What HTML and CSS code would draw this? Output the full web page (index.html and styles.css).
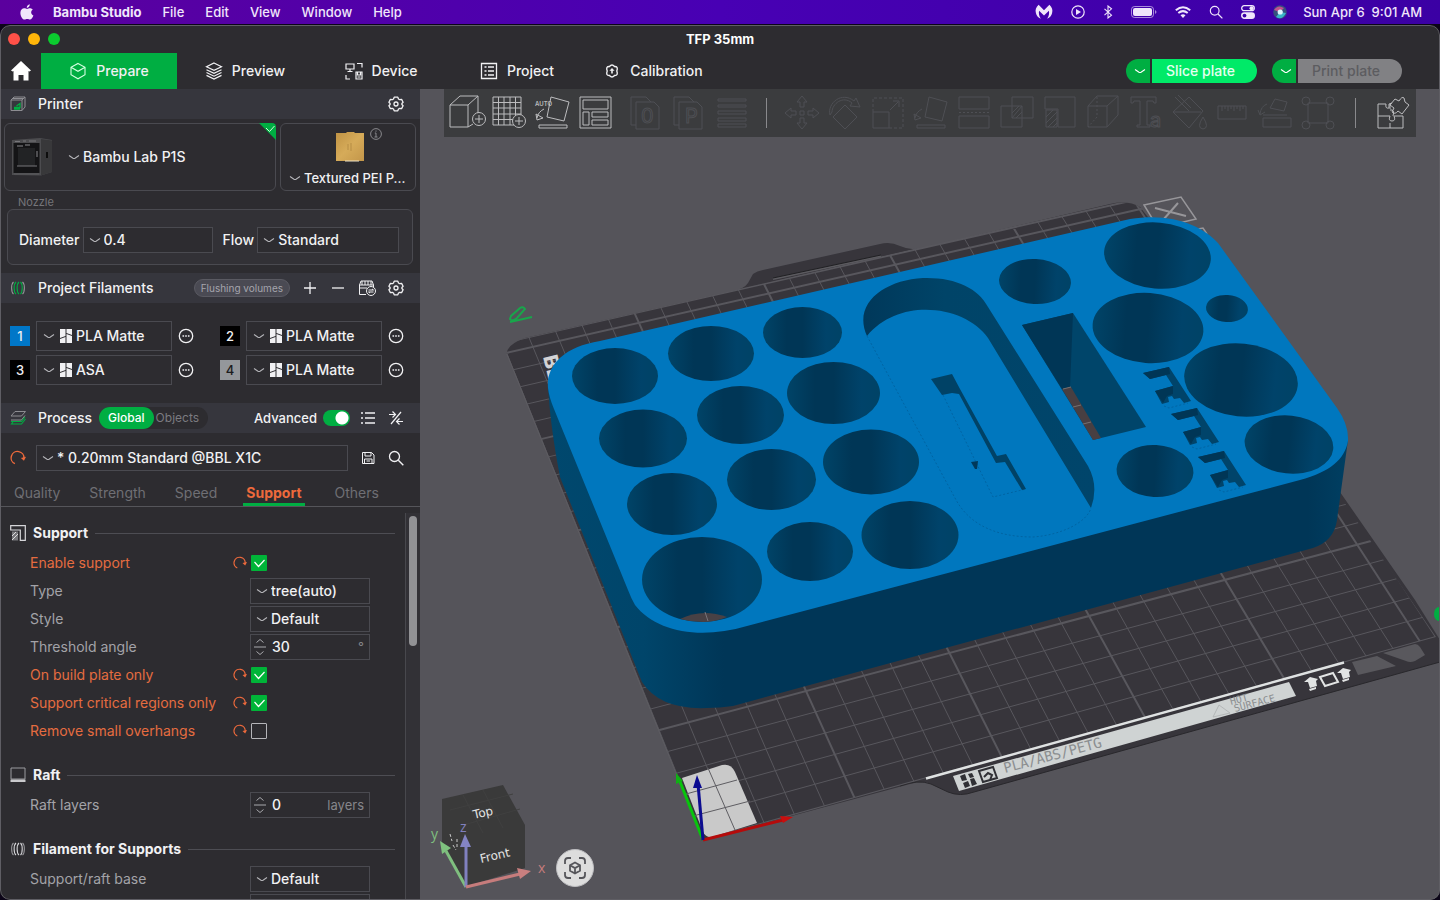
FILE: index.html
```html
<!DOCTYPE html>
<html lang="en">
<head>
<meta charset="utf-8">
<title>TFP 35mm - Bambu Studio</title>
<link rel="stylesheet" href="styles.css">
</head>
<body>
<svg class="defs" aria-hidden="true">
  <symbol id="chev" viewBox="0 0 12 12"><path d="M1 4.500L5 7.200Q6 7.800 7 7.200L11 4.500" fill="none" stroke="currentColor" stroke-width="1.100"/></symbol>
  <symbol id="gear" viewBox="0 0 16 16"><path d="M6.200 1.200h3.600l.7 1.800 1.200.7 1.900-.3 1.500 2.800-1.200 1.300v1l1.200 1.300-1.500 2.800-1.900-.3-1.200.7-.7 1.800H6.200l-.7-1.800-1.200-.7-1.900.3L.9 9.800l1.200-1.300v-1L.9 6.200l1.500-2.800 1.900.3 1.200-.7z" fill="none" stroke="currentColor" stroke-width="1.300" stroke-linejoin="round"/><circle cx="8" cy="8" r="2" fill="none" stroke="currentColor" stroke-width="1.300"/></symbol>
  <symbol id="dots" viewBox="0 0 16 16"><circle cx="8" cy="8" r="6.700" fill="none" stroke="currentColor" stroke-width="1.300"/><path d="M4.500 8h1.600M7.200 8h1.600M9.900 8h1.600" stroke="currentColor" stroke-width="1.500"/></symbol>
  <symbol id="brand" viewBox="0 0 12 14"><path fill="currentColor" d="M0 0h5.500v7L0 9zM0 10l5.500-2v6H0zM6.500 0H12v6L6.500 4zM6.500 5L12 7v7H6.500z"/></symbol>
  <symbol id="reset" viewBox="0 0 14 14"><path d="M4.300 12A5.600 5.600 0 1 1 12.200 7.300" fill="none" stroke="currentColor" stroke-width="1.200"/><path d="M9.500 7l2.700 2.400L14 6z" fill="currentColor"/></symbol>
  <symbol id="coil" viewBox="0 0 16 16"><g fill="none" stroke-width="1.100"><path stroke="#96969a" d="M3.500 2C1 4 1 12 3.500 14M12.500 2C15 4 15 12 12.500 14"/><path stroke="currentColor" d="M6 2C3.500 4 3.500 12 6 14M9 2C6.500 4 6.500 12 9 14M10.500 2C12.800 4 12.800 12 10.500 14"/></g></symbol>
  <symbol id="spin" viewBox="0 0 12 20"><path d="M2.500 5.500L6 2.500l3.500 3M0 10h12M2.500 14.500L6 17.500l3.500-3" fill="none" stroke="currentColor"/></symbol>
  <symbol id="search" viewBox="0 0 16 16"><circle cx="6.500" cy="6.500" r="5" fill="none" stroke="currentColor" stroke-width="1.300"/><path d="M10.300 10.300l5 5" stroke="currentColor" stroke-width="1.400"/></symbol>
</svg>

<header class="menubar">
  <nav class="menus" aria-label="Menu bar">
    <svg class="apple" viewBox="0 0 14 17"><path fill="currentColor" d="M9.800.3c.1 1.900-1.200 3.400-3 3.600C6.600 2.200 8.100.5 9.800.3zM12.700 5.800c-2.300 1.400-1.900 4.700.7 5.700-.7 1.900-2 4-3.400 4.100-1 0-1.500-.6-2.700-.6s-1.800.6-2.700.6C2.200 15.500.3 11.700.4 8.700.5 6 2.200 4.300 4.200 4.300c1.200 0 2.100.7 2.900.7.800 0 1.900-.8 3.300-.7.900.1 1.700.5 2.300 1.500z"/></svg>
    <b>Bambu Studio</b><span>File</span><span>Edit</span><span>View</span><span>Window</span><span>Help</span>
  </nav>
  <div class="status">
    <svg width="18" height="16" viewBox="0 0 20 16"><path fill="currentColor" d="M4 0l6 6 6-6c3 3 4 6 3 9-.5 3-2.500 5-5.500 6.500 2-3 2.500-6 2-9L10 12 4.500 6.500c-.5 3 0 6 2 9C3.500 14 1.500 12 1 9 0 6 1 3 4 0z"/></svg>
    <svg width="14" height="14" viewBox="0 0 14 14"><circle cx="7" cy="7" r="6.200" fill="none" stroke="currentColor" stroke-width="1.200"/><path d="M5 4l5 3-5 3z" fill="currentColor"/></svg>
    <svg width="10" height="14" viewBox="0 0 10 14"><path d="M1.500 3.800l7 6.400L5 13V1l3.500 2.800-7 6.400" fill="none" stroke="currentColor" stroke-width="1.100"/></svg>
    <svg width="26" height="12" viewBox="0 0 26 12"><rect x=".5" y=".5" width="22" height="11" rx="3" fill="none" stroke="currentColor" opacity=".6"/><rect x="2" y="2" width="19" height="8" rx="2" fill="currentColor"/><path d="M24 4v4q1.500-1 1.500-2T24 4" fill="currentColor" opacity=".6"/></svg>
    <svg width="16" height="12" viewBox="0 0 16 12"><g fill="none" stroke="currentColor" stroke-width="2"><path d="M.8 4.200q7.200-6 14.400 0M3.300 7q4.700-3.800 9.400 0"/></g><path d="M5.500 9.200q2.500-1.800 5 0L8 12z" fill="currentColor"/></svg>
    <svg width="14" height="14" viewBox="0 0 16 16"><use href="#search"/></svg>
    <svg width="14" height="14" viewBox="0 0 14 14"><g fill="none" stroke="currentColor" stroke-width="1.300"><rect x=".7" y=".7" width="12.600" height="5" rx="2.500"/><rect x=".7" y="8" width="12.600" height="5.300" rx="2.600" fill="currentColor"/></g><circle cx="10.500" cy="3.200" r="2" fill="currentColor"/><circle cx="3.500" cy="10.600" r="1.900" fill="#3d00a8"/></svg>
    <svg width="14" height="14" viewBox="0 0 14 14"><circle cx="7" cy="7" r="6.800" fill="#35507e"/><path d="M1 5q4-6 10-2L7 7z" fill="#c2508f"/><path d="M3 12q6 4 10-4L7 7z" fill="#39b4c8"/><circle cx="7.200" cy="7" r="2.600" fill="#dff4ff"/></svg>
    <time>Sun Apr 6&nbsp; 9:01 AM</time>
  </div>
</header>

<div class="window">
  <div class="titlebar">
    <div class="lights"><i class="close"></i><i class="min"></i><i class="max"></i></div>
    <h1>TFP 35mm</h1>
  </div>
  <div class="tabbar">
    <button class="home" aria-label="Home"><svg width="20" height="20" viewBox="0 0 20 20"><path fill="#fff" d="M10 0l10 9.500-1.500 1L17.500 10v9.500h-5V14h-5v5.500h-5V10l-1 .5L0 9.500z"/></svg></button>
    <nav class="tabs" aria-label="Views">
      <button class="on"><svg viewBox="0 0 18 18"><path d="M9 1.500l7 3.800v7.500l-7 4-7-4V5.300zM2 5.300l7 4 7-4" fill="none" stroke="#d5ffe2" stroke-width="1.100"/></svg>Prepare</button>
      <button><svg viewBox="0 0 18 18"><path d="M9 1l7.500 3.700L9 8.400 1.500 4.700zM1.500 7.700L9 11.300l7.500-3.600M1.500 10.500L9 14.200l7.500-3.700M1.500 13.400L9 17l7.500-3.600" fill="none" stroke="currentColor" stroke-width="1.200"/></svg>Preview</button>
      <button><svg viewBox="0 0 18 18"><path d="M1 2h8v5H1zM5 7v2M2.500 9.500h5M12 1.500h5v4M1 13v4h4M11 10h6v7h-6zM12.500 10v3h3v-3M12.500 15h3" fill="none" stroke="currentColor" stroke-width="1.200"/></svg>Device</button>
      <button><svg viewBox="0 0 18 18"><path d="M1.500 1.500h15v15h-15z" fill="none" stroke="currentColor" stroke-width="1.300"/><path d="M4.500 5h2M4.500 9h2M4.500 13h2M8 5h6M8 9h6M8 13h6" stroke="currentColor" stroke-width="1.300"/></svg>Project</button>
      <button><svg viewBox="0 0 18 18"><path d="M6.500 4.500q2.500-3 5 0 4-.2 2.300 4.500 1.700 4.700-2.300 4.500-2.500 3-5 0Q2.500 13.700 4.200 9 2.500 4.300 6.500 4.500z" fill="none" stroke="currentColor" stroke-width="1.400"/><path d="M9 6l2.600 2.800H9.800v2.700H8.200V8.800H6.400z" fill="currentColor"/></svg>Calibration</button>
    </nav>
    <div class="actions">
      <div class="pill"><button class="drop" aria-label="Slice options"><svg class="chev"><use href="#chev"/></svg></button><button class="go">Slice plate</button></div>
      <div class="pill"><button class="drop" aria-label="Print options"><svg class="chev"><use href="#chev"/></svg></button><button class="go off" disabled>Print plate</button></div>
    </div>
  </div>

  <div class="work">
    <aside class="side">
      <div class="bar">
        <svg class="lead" viewBox="0 0 16 16"><path d="M1 4l3-3h11v10l-3 3.500H1zM1 4h11v10.500M12 4l3-3M3 2.500h11" fill="none" stroke="#8d8d92"/><path d="M4 11.500h6V7.500L6.500 10M4 13h6" fill="none" stroke="#00ae42" stroke-width="1.300"/></svg>
        <h2>Printer</h2>
        <button class="ico push" aria-label="Printer settings"><svg><use href="#gear"/></svg></button>
      </div>
      <div class="cards">
        <div class="card machine">
          <svg width="42" height="42" viewBox="0 0 42 42"><path d="M1 4l28-2 12 2v32l-11 3.500L1 39z" fill="#4c4c4f"/><path d="M30 3l11 1.500V36l-11 3.500z" fill="#38383a"/><path d="M2.500 7h26v30h-26z" fill="#141416"/><path d="M7 12h17v18H7z" fill="#222325"/><path d="M4 5.500h5M12 5h3M18 5h7M6 30h20" stroke="#77777b" fill="none"/><path d="M26 15v6M6 10h6M14 9h5" stroke="#8a8a8e"/><path d="M36 16v6" stroke="#0d0d0d" stroke-width="2"/><path d="M3 38h25" stroke="#5b5b5e"/></svg>
          <svg class="chev"><use href="#chev"/></svg>
          <select aria-label="Printer model"><option>Bambu Lab P1S</option></select>
          <svg class="flag" viewBox="0 0 17 17"><path d="M0 0h13q4 0 4 4v13z" fill="#00ae42"/><path d="M7 5l3.500 3.500L15.500 3" fill="none" stroke="#d7f7e0"/></svg>
        </div>
        <div class="card bed">
          <svg class="pei" viewBox="0 0 28 30"><defs><linearGradient id="gold" x2="1" y2="1"><stop stop-color="#c09344"/><stop offset=".5" stop-color="#d6ab59"/><stop offset="1" stop-color="#c3964a"/></linearGradient></defs><path d="M0 1h10l1-1h7l1 1h9v28H0z" fill="url(#gold)"/><path d="M12 12v6M15 11v8" stroke="#b58c44"/><path d="M9 29h14" stroke="#eee2c6"/></svg>
          <svg class="info" viewBox="0 0 12 12"><circle cx="6" cy="6" r="5.400" fill="none" stroke="currentColor"/><path d="M6 5v4M4.800 5H6M4.500 9h3M6 2.500v1.200" stroke="currentColor" fill="none"/></svg>
          <div class="pick"><svg class="chev"><use href="#chev"/></svg><select aria-label="Plate type"><option>Textured PEI P...</option></select></div>
        </div>
      </div>
      <fieldset class="nozzle">
        <legend>Nozzle</legend>
        <div class="box">
          <label for="dia">Diameter</label>
          <span class="field grow"><svg class="chev"><use href="#chev"/></svg><select id="dia"><option>0.4</option></select></span>
          <label for="flow" class="flow">Flow</label>
          <span class="field grow2"><svg class="chev"><use href="#chev"/></svg><select id="flow"><option>Standard</option></select></span>
        </div>
      </fieldset>

      <div class="bar">
        <svg class="lead green"><use href="#coil"/></svg>
        <h2>Project Filaments</h2>
        <button class="flush push">Flushing volumes</button>
        <button class="ico" aria-label="Add filament"><svg viewBox="0 0 16 16"><path d="M8 2v12M2 8h12" stroke="currentColor" stroke-width="1.300"/></svg></button>
        <button class="ico" aria-label="Remove filament"><svg viewBox="0 0 16 16"><path d="M2 8h12" stroke="currentColor" stroke-width="1.300"/></svg></button>
        <button class="ico wide" aria-label="Sync filaments"><svg viewBox="0 0 18 16"><path d="M8 14.500H1.500V5l1.500-4h11l1.500 4v2M1.500 5h14M4 1v4M7 1v4M10 1v4M13 1v4M2 8h7" fill="none" stroke="currentColor"/><circle cx="13" cy="11" r="4.500" fill="#36363c" stroke="currentColor"/><path d="M10.500 10h5l-1.500-1M15.500 12h-5l1.500 1" fill="none" stroke="currentColor"/></svg></button>
        <button class="ico" aria-label="Filament settings"><svg><use href="#gear"/></svg></button>
      </div>
      <div class="filaments">
        <div class="fil"><b class="sw blue">1</b><span class="field"><svg class="chev"><use href="#chev"/></svg><svg class="brand"><use href="#brand"/></svg><select aria-label="Filament 1"><option>PLA Matte</option></select></span><button class="ico" aria-label="Edit filament 1"><svg><use href="#dots"/></svg></button></div>
        <div class="fil"><b class="sw">2</b><span class="field"><svg class="chev"><use href="#chev"/></svg><svg class="brand"><use href="#brand"/></svg><select aria-label="Filament 2"><option>PLA Matte</option></select></span><button class="ico" aria-label="Edit filament 2"><svg><use href="#dots"/></svg></button></div>
        <div class="fil"><b class="sw">3</b><span class="field"><svg class="chev"><use href="#chev"/></svg><svg class="brand"><use href="#brand"/></svg><select aria-label="Filament 3"><option>ASA</option></select></span><button class="ico" aria-label="Edit filament 3"><svg><use href="#dots"/></svg></button></div>
        <div class="fil"><b class="sw gray">4</b><span class="field"><svg class="chev"><use href="#chev"/></svg><svg class="brand"><use href="#brand"/></svg><select aria-label="Filament 4"><option>PLA Matte</option></select></span><button class="ico" aria-label="Edit filament 4"><svg><use href="#dots"/></svg></button></div>
      </div>

      <div class="bar">
        <svg class="lead" viewBox="0 0 16 16"><path d="M5 1.500h10.500L11.500 6H1zM15 5.500L11.500 10H1" fill="none" stroke="#8d8d92"/><path d="M15.500 9L11.500 14H1.500l1.500-2M15 7l-3.500 4.500H1" fill="none" stroke="#00ae42" stroke-width="1.100"/></svg>
        <h2>Process</h2>
        <div class="scope"><button class="on">Global</button><button>Objects</button></div>
        <label for="adv" class="push adv">Advanced</label><input type="checkbox" id="adv" class="switch" checked>
        <button class="ico list" aria-label="Parameter list"><svg viewBox="0 0 16 16"><path d="M1 3h2M1 8h2M1 13h2M5 3h10M5 8h10M5 13h10" stroke="currentColor" stroke-width="1.300"/></svg></button>
        <button class="ico" aria-label="Compare presets"><svg viewBox="0 0 16 16"><path d="M3 14L13 2M1 4.500h6M4.500 1.500l3 3-3 3M15 11.500H9M11.500 8.500l-3 3 3 3" fill="none" stroke="currentColor" stroke-width="1.200"/></svg></button>
      </div>
      <div class="preset">
        <button class="ico undo" aria-label="Reset preset"><svg viewBox="0 0 14 14"><use href="#reset"/></svg></button>
        <span class="field"><svg class="chev"><use href="#chev"/></svg><select aria-label="Process preset"><option>* 0.20mm Standard @BBL X1C</option></select></span>
        <button class="ico save" aria-label="Save preset"><svg viewBox="0 0 16 16"><path d="M2.500 2.500h9l2.500 2.500v8.500h-11.500zM5 2.500v3.500h6v-3.500M4.500 13.500v-4.500h7.500v4.500M6.500 11h3.500" fill="none" stroke="currentColor"/></svg></button>
        <button class="ico" aria-label="Search"><svg><use href="#search"/></svg></button>
      </div>
      <nav class="ptabs" aria-label="Process pages"><button>Quality</button><button>Strength</button><button>Speed</button><button class="on">Support</button><button>Others</button></nav>

      <div class="scroller">
        <form class="params">
          <section>
            <h3><svg viewBox="0 0 16 16"><path d="M.7 5V.7h14.600v14.600h-5V5z" fill="none" stroke="currentColor" stroke-width="1.200"/><path d="M2 6.500h6v9H2z" fill="#77777b"/><path d="M2 11l4-4M2 15l6-6" stroke="#ddd"/></svg>Support</h3>
            <div class="row mod"><label for="p1">Enable support</label><svg class="undo"><use href="#reset"/></svg><input type="checkbox" id="p1" checked></div>
            <div class="row"><label for="p2">Type</label><span class="field"><svg class="chev"><use href="#chev"/></svg><select id="p2"><option>tree(auto)</option></select></span></div>
            <div class="row"><label for="p3">Style</label><span class="field"><svg class="chev"><use href="#chev"/></svg><select id="p3"><option>Default</option></select></span></div>
            <div class="row"><label for="p4">Threshold angle</label><span class="field"><svg class="spin"><use href="#spin"/></svg><input type="text" id="p4" value="30"><i>°</i></span></div>
            <div class="row mod"><label for="p5">On build plate only</label><svg class="undo"><use href="#reset"/></svg><input type="checkbox" id="p5" checked></div>
            <div class="row mod"><label for="p6">Support critical regions only</label><svg class="undo"><use href="#reset"/></svg><input type="checkbox" id="p6" checked></div>
            <div class="row mod"><label for="p7">Remove small overhangs</label><svg class="undo"><use href="#reset"/></svg><input type="checkbox" id="p7"></div>
          </section>
          <section>
            <h3><svg viewBox="0 0 16 16"><path d="M1 1h14v11H1z" fill="none" stroke="#9b9b9f"/><path d="M.5 12.500h15v2.500H.5z" fill="#c9c9cc"/></svg>Raft</h3>
            <div class="row"><label for="p8">Raft layers</label><span class="field"><svg class="spin"><use href="#spin"/></svg><input type="text" id="p8" value="0"><i>layers</i></span></div>
          </section>
          <section>
            <h3><svg><use href="#coil"/></svg>Filament for Supports</h3>
            <div class="row"><label for="p9">Support/raft base</label><span class="field"><svg class="chev"><use href="#chev"/></svg><select id="p9"><option>Default</option></select></span></div>
            <div class="row last"><span class="field"></span></div>
          </section>
        </form>
        <div class="track"><div class="thumb"></div></div>
      </div>
    </aside>

    <main class="view">
      <svg class="scene" viewBox="420 89 1020 811" preserveAspectRatio="xMinYMin slice" role="img" aria-label="Build plate with model">
        <defs>
          <linearGradient id="hole"><stop stop-color="#004468"/><stop offset=".3" stop-color="#003656"/><stop offset=".5" stop-color="#003656"/><stop offset=".8" stop-color="#00436a"/><stop offset="1" stop-color="#004366"/></linearGradient>
          <linearGradient id="body" gradientUnits="userSpaceOnUse" x1="548" x2="1348" y1="0" y2="0"><stop stop-color="#00486e"/><stop offset=".12" stop-color="#00456a"/><stop offset=".22" stop-color="#003657"/><stop offset=".95" stop-color="#003657"/><stop offset="1" stop-color="#003f62"/></linearGradient>
          <linearGradient id="slot"><stop stop-color="#00385a"/><stop offset=".35" stop-color="#004468"/><stop offset="1" stop-color="#00456b"/></linearGradient>
          <clipPath id="bedclip"><path d="M507 354Q506 343 525 338L1110 204Q1128 200 1140 207L1146 211 1436 637 703 840z"/></clipPath>
        </defs>
        <path d="M507 354Q506 345 525 338L733 291Q744 289 748 283L753 274Q757 271 763 270L880 244Q890 241 900 246 911 251 922 248L1110 204Q1128 200 1140 207L1158 230 1415 600 1440 640V662L974 792Q960 797 948 792L931 784Q924 780 910 784L703 840z" fill="#37353b"/>
        <path d="M507 354L703 840" stroke="#636267" fill="none"/>
        <path d="M900 786Q918 779 931 784L948 792Q960 797 974 792L1440 662" fill="none" stroke="#29282c"/>
        <path d="M773 279l108-23" stroke="#5b5a5f" stroke-width="2"/><path d="M773 278l108-23" stroke="#202023"/>
        <g id="grid" clip-path="url(#bedclip)" stroke="#58575d" fill="none"></g>
        <text class="bedtext" transform="translate(543 357) rotate(76)">BB</text>
        <g fill="none" stroke="#97969a" stroke-width="1.500"><path d="M1144 205l37-8 15 22-38 9z"/><path d="M1155 208l31 8M1178 203l-15 17" stroke-width="2"/><path d="M1198 229l5-1 4 6"/></g>
        <g stroke="#18a64b" fill="none" stroke-width="2"><path d="M511 316l9-8q3-2 5 1l-8 9q-5 4-7 1zM510 322l22-5"/></g>
        <ellipse cx="1439" cy="614" rx="5" ry="7" fill="#00ae42"/>

        <path d="M682 778L722 765Q731 763 735 772L757 823 712 837Q706 838 703 832z" fill="#c9c9c9"/>
        <path d="M686 794l51-14M693 816l57-15M708 768l27 62" stroke="#5e5d62" fill="none"/>

        <path d="M926 778.500L1344 662.500" stroke="#dfe2e2" stroke-width="2.500"/>
        <path d="M953 776L1289 682l7 14L959 791z" fill="#cfd3d3"/>
        <g fill="#303035"><path d="M960 776l5-2 2 6-5 1zM963 783l5-2 2 5-5 2zM968 774l4-1 2 4-4 1zM970 779l4-1 3 6-5 2z"/></g>
        <path d="M979 771l14-4 4 11-14 4zM984 777l4-4 4 2-2 5" fill="none" stroke="#303035" stroke-width="2"/>
        <text class="plate" transform="translate(1005 773) rotate(-15)">PLA/ABS/PETG</text>
        <path d="M1213 717l6-12 11 8z" fill="none" stroke="#b4b7b8"/>
        <text class="hot" transform="translate(1231 705) rotate(-15)">HOT</text><text class="hot" transform="translate(1235 712) rotate(-15)">SURFACE</text>
        <g fill="#e2e4e4"><path d="M1304 682l6-5 8 2-2 2 1 5-7 2-2-6zM1309 689l7-2v2l-6 2z"/><path d="M1337 673l6-5 8 2-2 2 1 5-7 2-2-6zM1342 680l7-2v2l-6 2z"/></g>
        <path d="M1320 677l13-4 5 9-13 4z" fill="none" stroke="#e2e4e4" stroke-width="2"/>
        <path d="M1352 662l25-6 19 10-38 9zM1383 653l32-9q3 0 5 3l5 8-10 6q-5 2-9 0z" fill="#59585d"/>

        <path d="M548 385Q550 425 560 477L642 682Q660 710 707 708 720 708 733 706L1313 548Q1334 541 1337 520L1348 440 1200 300 600 360z" fill="url(#body)"/>
        <path d="M548 388C546 366 563 347 600 341L1130 219C1172 212 1203 226 1218 243L1337 408Q1349 425 1348 441C1345 459 1330 472 1300 480L747 626C700 640 656 632 635 605Q631 598 628 590L554 409Q549 397 548 388z" fill="#0077be"/>
        <g fill="url(#hole)">
          <ellipse cx="615" cy="376" rx="43" ry="28"/><ellipse cx="711" cy="353.500" rx="43" ry="27.500"/><ellipse cx="802.500" cy="332.500" rx="39.500" ry="25.500"/>
          <ellipse cx="643" cy="438.500" rx="44" ry="29"/><ellipse cx="740.500" cy="415" rx="43.500" ry="29"/><ellipse cx="833.500" cy="393" rx="46.500" ry="31"/>
          <ellipse cx="672" cy="504" rx="45" ry="31"/><ellipse cx="771.500" cy="479.500" rx="44.500" ry="30.500"/><ellipse cx="871" cy="462" rx="48" ry="32.500"/>
          <ellipse cx="702" cy="579.500" rx="60" ry="42.500"/><ellipse cx="810" cy="551.500" rx="43" ry="29.500"/><ellipse cx="910" cy="535" rx="48.500" ry="34"/>
          <ellipse cx="1035" cy="281.500" rx="36" ry="22.500" transform="rotate(3 1035 281)"/>
          <ellipse cx="1157.500" cy="255.500" rx="53.500" ry="33" transform="rotate(5 1157 255)"/>
          <ellipse cx="1148" cy="328" rx="55.500" ry="35" transform="rotate(4 1148 328)"/>
          <ellipse cx="1227" cy="308.500" rx="21" ry="13.500" transform="rotate(4 1227 308)"/>
          <ellipse cx="1241" cy="380" rx="57" ry="36.500" transform="rotate(6 1241 380)"/>
          <ellipse cx="1289" cy="444.500" rx="44.500" ry="29" transform="rotate(6 1289 444)"/>
          <ellipse cx="1155" cy="471" rx="38.500" ry="26" transform="rotate(3 1155 471)"/>
        </g>
        <path d="M680 619q22-11 47-2-12 5-24 5-12 0-23-3z" fill="#484145"/><path d="M705 612l3 9" stroke="#77747a"/>
        <path d="M867 336C852 303 885 280 923 278 955 277 978 288 988 307L1088 466Q1099 486 1091 508L988 338C966 306 900 296 867 336z" fill="url(#slot)"/>
        <path d="M867 336L955 498C970 527 1000 537 1033 537 1062 535 1087 522 1091 508M943 395l50 102 33-8" fill="none" stroke="#00609c" stroke-width=".8" stroke-dasharray="2 2"/>
        <path d="M931 379l21-5 8 15 37 67 9-2 20 35-4 1-17-28-9 1-37-69-7-1-10 2z" fill="#004266"/>
        <path d="M971 462l7-1-1 8h-2z" fill="#00385a"/>
        <path d="M1022 325l51-12 73 114-53 13z" fill="#00456a"/><path d="M1022 325l51-12-3 75-8 1z" fill="#003656"/>
        <path d="M1062 389l9-2 30 51-8 2z" fill="#483f42"/><path d="M1063 389l8-2M1073 407l8-2M1083 424l8-2" stroke="#77706f"/>
        <defs><g id="ecut">
          <path d="M1143 373l26-6 22 34-7 2-4-5-6 1-2-3-4 1 1 5-7 2-7-13 18-5-7-11-16 4z" fill="#00446a"/>
          <path d="M1143 373l26-6 1 7-20 5zM1155 391l18-5 0 8-6 2-4 7z" fill="#003656"/>
          <path d="M1164 406l5 2 19-5" fill="none" stroke="#00609c" stroke-width=".8" stroke-dasharray="2 2"/>
        </g></defs>
        <use href="#ecut"/><use href="#ecut" x="28" y="41"/><use href="#ecut" x="55" y="84"/>

        <g stroke-width="3" fill="none"><path d="M703 840L679 779" stroke="#08c40c"/><path d="M703 840L783 820" stroke="#b50b0b"/><path d="M703 840L698 784" stroke="#0d0d90"/></g>
        <path d="M676 773l7 8-7 3z" fill="#10b014"/><path d="M793 817l-13-1 3 7z" fill="#c80e0e"/><path d="M697 775l5 13h-9z" fill="#0a0a90"/>

        <path d="M442 799l61-14 22 40v43l-60 19-23-45z" fill="#3a3a3a"/>
        <path d="M450 810l63-16M460 826l60-17M463 795l20 38M483 790l20 38" stroke="#404040" fill="none"/>
        <text class="cube" transform="translate(474 819) rotate(-13)">Top</text><text class="cube" transform="translate(481 863) rotate(-13)">Front</text>
        <path d="M450 834l2 7M453 845l3 5M457 839v8" stroke="#c9c9c9" stroke-dasharray="3 2"/>
        <g stroke-width="3"><path d="M466 887L446 851" stroke="#7fbf7f"/><path d="M466 887V846" stroke="#8080bf"/><path d="M466 887L520 874" stroke="#c67c7c"/></g>
        <path d="M440 841l11 7-9 6z" fill="#7fc37f"/><path d="M465 834l6 13h-11z" fill="#8484c4"/><path d="M531 871l-14-3 3 11z" fill="#c97f7f"/>
        <text class="ax" x="431" y="839" fill="#7fbf7f">y</text><text class="ax" x="460" y="832" fill="#8080bf">z</text><text class="ax" x="538" y="873" fill="#c67c7c">x</text>
      </svg>

      <div class="toolbar" role="toolbar" aria-label="Model tools">
        <button><svg><path d="M1 10h18v22H1zM1 10l10-9h18L19 10M29 1v17M19 32l5-3"/><circle cx="30" cy="24" r="6.500"/><path d="M26 24h8M30 20v8"/></svg></button>
        <button><svg><path d="M1 2h28v28H1zM6.500 2v28M12 2v28M18 2v28M23.500 2v28M1 7.500h28M1 13h28M1 19h28M1 24.500h28"/><circle cx="27" cy="26" r="6.500" fill="#3b3c3e"/><path d="M23 26h8M27 22v8"/></svg></button>
        <button><svg><path d="M16 2l18 5-5 19-17-4zM4 30h28v3H4zM2 23q1-6 7-9M1 19l1 6 6-2z"/><text x="0" y="11">AUTO</text></svg></button>
        <button><svg><path d="M2 2h31v31H2zM5 5h25v9H5zM5 17h6v13H5zM14 17h16v5H14zM14 25h16v5H14z"/></svg></button>
        <button class="off gap" disabled><svg><path d="M8 30H3V2h15l5 5M8 7h18l5 5v22H8z"/><text class="big" x="13" y="28">0</text></svg></button>
        <button class="off" disabled><svg><path d="M8 30H3V2h15l5 5M8 7h18l5 5v22H8z"/><text class="big" x="14" y="28">P</text></svg></button>
        <button class="off" disabled><svg><path d="M4 4h28v2H4zM4 10h28v2H4zM4 16h28v3H4zM4 23h28v3H4zM4 29h28v3H4z"/></svg></button>
        <i class="sep"></i>
        <button class="off" disabled><svg><path d="M18 1l5 6h-3v5h-4V7h-3zM18 34l5-6h-3v-5h-4v5h-3zM1 18l6-5v3h5v4H7v3zM35 18l-6-5v3h-5v4h5v3zM16 16h4v4h-4z"/></svg></button>
        <button class="off" disabled><svg><path d="M18 10l12 12-12 12L6 22zM3 20C0 8 15-4 27 6l2-3 4 9-10-1 2-3C16 0 5 9 5 17z"/></svg></button>
        <button class="off" disabled><svg><path d="M3 17h16v16H3z"/><path stroke-dasharray="3 2" d="M3 17V3h30v30H19"/><path d="M20 15l8-8M23 6h6v6"/></svg></button>
        <button class="off" disabled><svg><path d="M16 2l18 5-5 19-17-4zM4 30h28v3H4zM2 23q1-6 7-9M1 19l1 6 6-2z"/></svg></button>
        <button class="off" disabled><svg><path d="M3 2h30v12H3zM3 21h30v12H3z"/><path stroke-dasharray="2 2" d="M3 17.500h30"/></svg></button>
        <button class="off" disabled><svg><path d="M2 11h21v21H2zM13 2h21v21H13zM13 23l10-12M13 18l7-7M17 23l6-6"/></svg></button>
        <button class="off" disabled><svg><path d="M3 14V2h30v30H16V14zM4 15h11v17H4zM4 22l7-7M4 28l11-11M6 32l9-9M11 32l4-4"/></svg></button>
        <button class="off" disabled><svg><path d="M3 11h19v21H3zM3 11l9-10h21L22 11M33 1v19L22 32"/><path stroke-dasharray="2 2" d="M12 2v20l-9 10"/></svg></button>
        <button class="off" disabled><svg><path d="M3 2h25v6h-2l-1-2h-6v24h3v2H9v-2h3V6H6L5 8H3z"/><text class="big" x="22" y="32">a</text></svg></button>
        <button class="off" disabled><svg><path d="M18 2l14 14-14 17L2 17zM2 17h28M4 2l14 14M7 0l13 13M32 22q7 11 0 12-7-1 0-12"/></svg></button>
        <button class="off" disabled><svg><path d="M4 11h28v13H4zM8 11v5M11 11v3M14 11v5M17 11v3M20 11v5M23 11v3M26 11v5M29 11v3"/></svg></button>
        <button class="off" disabled><svg><path d="M6 23h28v9H6zM18 4l12 3-3 9-14-3zM6 20h24M3 19Q4 11 10 9M1 15l2 5 5-3"/></svg></button>
        <button class="off" disabled><svg><path d="M8 8h20v20H8z"/><circle cx="6" cy="6" r="4"/><circle cx="30" cy="6" r="4"/><circle cx="6" cy="30" r="4"/><circle cx="30" cy="30" r="4"/></svg></button>
        <i class="sep last"></i>
        <button><svg><path d="M5 9h8q-1 5 3 4v-4l3-1M5 9v24h25V21H21q2 5-2 5t-2-5H5M17 33v-5M17 15q5-1 3 6M17 9v5M22 4l4 2q3-5 5-3l1 4 4 3-7 9-4-3q-3 4-6 1l2-4-4-3z"/></svg></button>
      </div>
      <button class="fit" aria-label="Fit camera"><svg viewBox="0 0 24 24"><path d="M2 8V5q0-3 3-3h3M16 2h3q3 0 3 3v3M22 16v3q0 3-3 3h-3M8 22H5q-3 0-3-3v-3M12 6.500l5 2.800v5.400l-5 2.800-5-2.800V9.300zM7 9.300l5 2.800 5-2.800M12 12v5.500" fill="none" stroke="#55555a" stroke-width="1.800"/></svg></button>
    </main>
  </div>
</div>
<script src="grid.js"></script>
</body>
</html>
```
FILE: styles.css
```css
* { box-sizing: border-box; }
body { margin: 0; height: 100vh; display: flex; flex-direction: column; overflow: hidden; background: #0c0518; color: #f1f1f3; font: 13px/16px Inter, "Liberation Sans", sans-serif; }
button, select, input { font: inherit; color: inherit; background: none; border: 0; margin: 0; padding: 0; }
button { display: flex; align-items: center; justify-content: center; }
h1, h2, h3 { margin: 0; font-size: 13px; }
i { font-style: normal; }
svg { flex: none; }
select { appearance: none; flex: 1; min-width: 0; outline: 0; font-weight: 500; font-size: 14px; }
.defs { position: absolute; width: 0; height: 0; }

.menubar { flex: none; height: 24px; display: flex; justify-content: space-between; align-items: center; padding: 0 18px 0 20px; background: linear-gradient(90deg, #5b009e, #4800b4 50%, #3b00a4); font-weight: 500; color: #f0e6fb; }
.menus { display: flex; gap: 21px; align-items: center; }
.menus b { font-weight: 700; margin-left: -2px; }
.apple { width: 14px; height: 17px; }
.status { display: flex; align-items: center; gap: 18px; }
.status time { margin-left: -2px; }

.window { flex: 1; min-height: 0; display: flex; flex-direction: column; position: relative; margin-top: 1px; background: #2d2c30; border-radius: 10px; overflow: hidden; }
.window::after { content: ""; position: absolute; inset: 0; border: 1px solid #5f5e64; border-radius: 10px; pointer-events: none; }
.titlebar { flex: none; height: 28px; display: grid; grid-template-columns: 1fr auto 1fr; align-items: center; padding: 0 8px; }
.titlebar h1 { font-weight: 700; color: #fff; }
.lights { display: flex; gap: 8px; }
.lights i { width: 12px; height: 12px; border-radius: 50%; }
.close { background: #ff5148; } .min { background: #ffb60a; } .max { background: #0bcb2f; }
.tabbar { flex: none; height: 36px; display: flex; align-items: stretch; }
.home { width: 41px; }
.tabs { display: flex; flex: 1; }
.tabs button { width: 136px; gap: 9px; font-size: 14px; font-weight: 500; }
.tabs svg { width: 18px; height: 18px; }
.tabs .on { background: #00ae42; }
.actions { display: flex; gap: 15px; align-items: center; padding-right: 38px; }
.pill { display: flex; gap: 2px; height: 24px; border-radius: 12px; overflow: hidden; }
.drop { width: 24px; background: #00ae42; padding-left: 3px; }
.go { width: 105px; background: #00ea68; font-weight: 500; font-size: 14px; padding-right: 8px; color: #e4fff0; }
.go.off { width: 104px; background: #818184; color: #5c5c60; }

.work { flex: 1; min-height: 0; display: flex; }
.side { flex: none; width: 420px; display: flex; flex-direction: column; background: #2d2c30; }
.bar { flex: none; height: 30px; display: flex; align-items: center; padding: 0 16px 0 10px; background: #36363d; }
.bar h2 { font-size: 14px; font-weight: 500; margin-left: 12px; }
.lead { width: 16px; height: 16px; color: #00ae42; }
.push { margin-left: auto; }
.ico { width: 16px; height: 16px; }
.ico svg { width: 16px; height: 16px; }
.chev { width: 12px; height: 12px; color: #b4b4b8; }
.pill .chev { color: #fff; }
.bar .ico + .ico, .flush + .ico { margin-left: 12px; }
.bar .ico.wide, .ico.wide svg { width: 18px; }

.cards { flex: none; display: flex; gap: 4px; padding: 4px 4px 0; height: 72px; }
.card { position: relative; border: 1px solid #4a4a50; border-radius: 6px; display: flex; align-items: center; }
.machine { flex: none; width: 272px; padding-left: 6px; }
.machine .chev { margin: 0 3px 0 15px; }
.flag { position: absolute; top: -1px; right: -1px; width: 17px; height: 17px; }
.bed { flex: 1; min-width: 0; flex-direction: column; justify-content: space-between; padding: 8px 4px 4px 8px; }
.pei { width: 28px; height: 30px; }
.info { position: absolute; top: 4px; right: 33px; width: 12px; height: 12px; color: #88888c; }
.pick { display: flex; align-items: center; gap: 3px; align-self: stretch; }
.bed select { font-size: 13px; }

.nozzle { flex: none; margin: 4px 7px 8px; padding: 0; min-width: 0; border: 0; font-weight: 500; font-size: 14px; }
.nozzle legend { font-size: 11px; line-height: 14px; color: #75757a; font-weight: 400; padding: 0 0 0 11px; }
.box { height: 56px; display: flex; align-items: center; padding: 6px 13px 0 11px; border: 1px solid #4a4a50; border-radius: 6px; background: #323136; }
.field { height: 26px; display: flex; align-items: center; gap: 3px; border: 1px solid #4a4a50; background: #2d2c30; padding: 0 5px; min-width: 0; }
.grow { flex: 130; margin-left: 3px; } .grow2 { flex: 143; margin-left: 3px; }
.flow { margin-left: 10px; }

.flush { height: 18px; border-radius: 9px; border: 1px solid #5a5a62; background: #4a4a53; color: #a5a5ad; font-size: 10px; padding: 0 6px; }
.filaments { flex: none; display: grid; grid-template-columns: 1fr 1fr; gap: 4px 26px; padding: 18px 16px 18px 10px; }
.fil { display: flex; align-items: center; gap: 6px; }
.fil .field { flex: 1; height: 30px; padding-left: 6px; gap: 4px; }
.brand { width: 12px; height: 14px; margin-left: 1px; }
.sw { width: 20px; height: 20px; background: #000; text-align: center; line-height: 20px; font-weight: 500; }
.sw.blue { background: #0077c8; } .sw.gray { background: #94979b; color: #1c1c1e; }

.scope { display: flex; margin-left: 7px; height: 22px; border-radius: 11px; background: #2d2c30; font-size: 12px; }
.scope button { padding: 0 9px 0 2px; color: #7b7b80; }
.scope .on { padding: 0 9px; border-radius: 11px; background: #00ae42; color: #fff; font-weight: 500; }
.adv { font-weight: 500; font-size: 13px; }
.switch { appearance: none; width: 27px; height: 16px; border-radius: 8px; background: radial-gradient(circle at 19px 8px, #fff 6px, #00ae42 7px); margin: 0 10px 0 6px; }
.preset { flex: none; display: flex; align-items: center; padding: 12px 16px 10px 10px; }
.undo { color: #ee6a3c; width: 14px; height: 14px; }
.preset .undo { width: 16px; height: 16px; }
.preset .field { flex: 1; margin: 0 12px 0 10px; }
.preset .save { margin-right: 12px; }
.ptabs { flex: none; display: flex; height: 26px; border-bottom: 1px solid #55555a; padding-left: 11px; gap: 23px; }
.ptabs button { font-size: 14px; color: #6f6f74; padding: 2px 3px 0; border-bottom: 3px solid transparent; }
.ptabs .on { color: #ee6a3c; font-weight: 700; border-color: #00ae42; }
.ptabs .on + button { margin-left: 4px; }

.scroller { flex: 1; min-height: 0; display: flex; overflow: hidden; }
.params { flex: 1; padding: 14px 10px 0; }
.params section { margin-bottom: 18px; }
.params h3 { display: flex; align-items: center; gap: 7px; height: 24px; margin-bottom: 4px; font-size: 14px; font-weight: 700; }
.params h3::after { content: ""; flex: 1; height: 1px; background: #4d4d53; }
.params h3 svg { width: 16px; height: 16px; color: #d6d6d9; }
.row { height: 28px; display: flex; align-items: center; padding: 0 25px 0 20px; color: #a3a3a8; }
.row label { flex: none; width: 220px; font-size: 14px; }
.row .field { flex: 1; color: #f1f1f3; }
.row.last { padding-left: 240px; }
.row.mod { color: #e56c40; }
.row.mod label { width: 203px; }
.row input[type=checkbox] { appearance: none; width: 16px; height: 16px; margin-left: 4px; border: 1px solid #b5b5b9; border-radius: 1px; }
.row input:checked { border: 0; background: #00b438 url("data:image/svg+xml,%3Csvg xmlns='http://www.w3.org/2000/svg' viewBox='0 0 16 16'%3E%3Cpath d='M3.500 7l4 4.500L13.500 5' fill='none' stroke='white' stroke-width='1.200'/%3E%3C/svg%3E"); }
.row input[type=text] { flex: 1; min-width: 0; width: 20px; font-size: 14px; font-weight: 500; padding-left: 3px; }
.row i { color: #86868b; }
.spin { width: 12px; height: 20px; color: #a9a9ad; margin-left: -2px; }
.track { width: 15px; border-left: 1px solid #48484d; padding: 3px; margin-top: 6px; background: #323136; }
.thumb { width: 8px; height: 130px; border-radius: 4px; background: #929295; }

.view { flex: 1; min-width: 0; position: relative; background: #55545a; overflow: hidden; }
.scene { display: block; width: 100%; height: 100%; }
.bedtext { font: 800 20px Inter, sans-serif; fill: #d3d3d5; }
.plate { font: 14px "DejaVu Sans Mono", monospace; fill: #8b8e90; }
.hot { font: 10px "DejaVu Sans Mono", monospace; fill: #8b8e90; }
.cube { font: 12px "DejaVu Sans", sans-serif; fill: #e3e3e3; }
.ax { font: 14px "Open Sans", sans-serif; }
.toolbar { position: absolute; top: 0; left: 24px; right: 24px; height: 48px; display: flex; align-items: center; background: #3b3c3e; padding-left: 1px; color: #bcbcbe; }
.toolbar button { width: 43px; height: 36px; flex: none; }
.toolbar svg { width: 36px; height: 36px; fill: none; stroke: currentColor; stroke-width: 1; overflow: visible; }
.toolbar text { font-size: 6px; font-weight: 600; stroke: none; fill: currentColor; }
.toolbar .big { font-size: 20px; font-weight: 400; stroke: currentColor; fill: none; }
.toolbar .off { color: #4e4f54; }
.toolbar .gap { margin-left: 7px; }
.sep { width: 1px; height: 30px; background: #89898c; margin: 0 13px; }
.sep.last { margin-left: 16px; }
.fit { position: absolute; left: 136px; bottom: 13px; width: 38px; height: 38px; border-radius: 50%; background: #dddddd; border: 1px solid #bdbdc0; }
.fit svg { width: 24px; height: 24px; }
```
FILE: grid.js
```js
// Projects the 256 mm bed grid onto the scene with a four-corner perspective map.
(function () {
  var size = 256;
  var a = [703, 840], b = [1436, 637], c = [1148, 197], d = [502, 343];
  var dx1 = b[0] - c[0], dx2 = d[0] - c[0], sx = a[0] - b[0] + c[0] - d[0];
  var dy1 = b[1] - c[1], dy2 = d[1] - c[1], sy = a[1] - b[1] + c[1] - d[1];
  var den = dx1 * dy2 - dx2 * dy1;
  var g = (sx * dy2 - dx2 * sy) / den, h = (dx1 * sy - sx * dy1) / den;
  function project(x, y) {
    var u = x / size, v = y / size, w = g * u + h * v + 1;
    return ((b[0] - a[0] + g * b[0]) * u + (d[0] - a[0] + h * d[0]) * v + a[0]) / w + " " +
           ((b[1] - a[1] + g * b[1]) * u + (d[1] - a[1] + h * d[1]) * v + a[1]) / w;
  }
  var fine = "", bold = "";
  for (var i = 0; i <= 25; i++) {
    var p = i * 10;
    var seg = "M" + project(p, 0) + "L" + project(p, size) + "M" + project(0, p) + "L" + project(size, p);
    if (i % 5) { fine += seg; } else { bold += seg; }
  }
  bold += "M" + project(size, 0) + "L" + project(size, size) + "M" + project(0, size) + "L" + project(size, size);
  [[fine, 1], [bold, 2]].forEach(function (part) {
    var path = document.createElementNS("http://www.w3.org/2000/svg", "path");
    path.setAttribute("d", part[0]);
    path.setAttribute("stroke-width", part[1]);
    document.getElementById("grid").appendChild(path);
  });
})();
```
